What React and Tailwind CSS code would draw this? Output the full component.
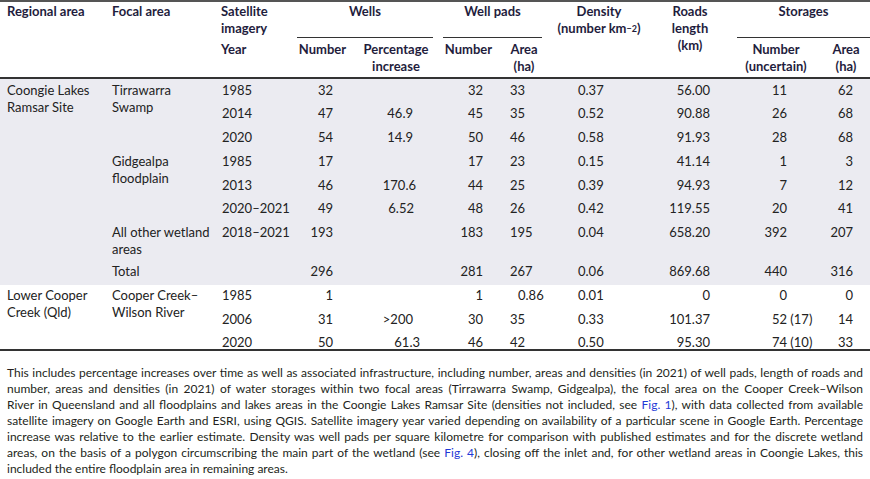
const cols = [105, 109, 76, 65, 82, 63, 48, 102, 80, 92, 48];

const cell = "align-top pt-[2.5px] pb-[4.3px] leading-[17px] whitespace-nowrap";
const lastCell = "align-top pt-[3px] pb-0 leading-[14px] whitespace-nowrap";

const coongie = [
  { year: "1985", wn: "32", pct: "", pnum: "32", parea: "33", dens: "0.37", road: "56.00", sn: "11", sx: "", sa: "62" },
  { year: "2014", wn: "47", pct: "46.9", pnum: "45", parea: "35", dens: "0.52", road: "90.88", sn: "26", sx: "", sa: "68" },
  { year: "2020", wn: "54", pct: "14.9", pnum: "50", parea: "46", dens: "0.58", road: "91.93", sn: "28", sx: "", sa: "68" },
  { year: "1985", wn: "17", pct: "", pnum: "17", parea: "23", dens: "0.15", road: "41.14", sn: "1", sx: "", sa: "3" },
  { year: "2013", wn: "46", pct: "170.6", pctPad: "pr-[21px]", pnum: "44", parea: "25", dens: "0.39", road: "94.93", sn: "7", sx: "", sa: "12" },
  { year: "2020–2021", wn: "49", pct: "6.52", pctPad: "pr-[23px]", pnum: "48", parea: "26", dens: "0.42", road: "119.55", sn: "20", sx: "", sa: "41" },
];

const cooper = [
  { year: "1985", wn: "1", pct: "", pnum: "1", parea: "0.86", pareaPad: "pl-[18px]", dens: "0.01", road: "0", sn: "0", sx: "", sa: "0" },
  { year: "2006", wn: "31", pct: ">200", pnum: "30", parea: "35", dens: "0.33", road: "101.37", sn: "52", sx: " (17)", sa: "14" },
  { year: "2020", wn: "50", pct: "61.3", pctPad: "pr-[17px]", pnum: "46", parea: "42", dens: "0.50", road: "95.30", sn: "74", sx: " (10)", sa: "33", last: true },
];

function Values({ r, yearCell = true }) {
  const c = r.last ? lastCell : cell;
  return (
    <>
      {yearCell && <td className={`${c} pl-[8px]`}>{r.year}</td>}
      <td className={`${c} text-right pr-[22px]`}>{r.wn}</td>
      <td className={`${c} text-right ${r.pctPad || "pr-[24px]"}`}>{r.pct}</td>
      <td className={`${c} text-right pr-[17px]`}>{r.pnum}</td>
      <td className={`${c} ${r.pareaPad || "pl-[10px]"}`}>{r.parea}</td>
      <td className={`${c} pl-[30px]`}>{r.dens}</td>
      <td className={`${c} text-right pr-[20px]`}>{r.road}</td>
      <td className={c}>
        <span className="inline-block w-[57px] text-right">{r.sn}</span>
        {r.sx}
      </td>
      <td className={`${c} text-right pr-[17px]`}>{r.sa}</td>
    </>
  );
}

function Link({ children }) {
  return <span className="text-[#1f3ad6]">{children}</span>;
}

const Line = ({ children, last }) => (
  <div className={last ? "whitespace-nowrap" : "whitespace-nowrap text-justify [text-align-last:justify]"}>{children}</div>
);

export default function App() {
  return (
    <div className="w-[870px] h-[479px] bg-white overflow-hidden text-[#222] [font-family:Lato,'Noto_Sans',sans-serif]">
      <table className="w-[870px] table-fixed border-collapse text-[13px]">
        <colgroup>
          {cols.map((w, i) => (
            <col key={i} style={{ width: w }} />
          ))}
        </colgroup>
        <thead className="text-[#1f1d3d] font-bold">
          <tr className="border-t-2 border-[#555]">
            <th rowSpan={2} className="align-top text-left pl-[7px] pt-[1px] leading-[17px] font-bold">Regional area</th>
            <th rowSpan={2} className="align-top text-left pl-[7px] pt-[1px] leading-[17px] font-bold">Focal area</th>
            <th className="align-top text-left pl-[7px] pt-[1px] pb-[0px] leading-[17px] font-bold">
              Satellite
              <br />
              imagery
            </th>
            <th colSpan={2} className="align-top pt-[1px] leading-[17px] font-bold">
              <div className="ml-[7px] mr-[4px] h-[35px] border-b border-[#333]">Wells</div>
            </th>
            <th colSpan={2} className="align-top pt-[1px] leading-[17px] font-bold">
              <div className="mx-[6px] h-[35px] border-b border-[#333]">Well pads</div>
            </th>
            <th rowSpan={2} className="align-top pt-[1px] leading-[17px] font-bold">
              Density
              <br />
              (number km<sup className="text-[9px] relative -top-[1px]">−2</sup>)
            </th>
            <th rowSpan={2} className="align-top pt-[1px] leading-[17px] font-bold">
              Roads
              <br />
              length
              <br />
              (km)
            </th>
            <th colSpan={2} className="align-top pt-[1px] leading-[17px] font-bold">
              <div className="ml-[7px] h-[35px] border-b border-[#333]">Storages</div>
            </th>
          </tr>
          <tr className="border-b-2 border-[#333]">
            <th className="align-top text-left pl-[7px] pt-[3px] leading-[17px] font-bold">Year</th>
            <th className="align-top pt-[3px] leading-[17px] font-bold">Number</th>
            <th className="align-top pt-[3px] pb-[2px] leading-[17px] font-bold">
              Percentage
              <br />
              increase
            </th>
            <th className="align-top pt-[3px] leading-[17px] font-bold">Number</th>
            <th className="align-top pt-[3px] leading-[17px] font-bold">
              Area
              <br />
              (ha)
            </th>
            <th className="align-top pt-[3px] leading-[17px] font-bold">
              Number
              <br />
              (uncertain)
            </th>
            <th className="align-top pt-[3px] leading-[17px] font-bold">
              Area
              <br />
              (ha)
            </th>
          </tr>
        </thead>
        <tbody className="bg-[#ebebf1]">
          <tr>
            <td rowSpan={8} className={`${cell} pl-[7px]`}>
              Coongie Lakes
              <br />
              Ramsar Site
            </td>
            <td rowSpan={3} className={`${cell} pl-[7px]`}>
              Tirrawarra
              <br />
              Swamp
            </td>
            <Values r={coongie[0]} />
          </tr>
          <tr>
            <Values r={coongie[1]} />
          </tr>
          <tr>
            <Values r={coongie[2]} />
          </tr>
          <tr>
            <td rowSpan={3} className={`${cell} pl-[7px]`}>
              Gidgealpa
              <br />
              floodplain
            </td>
            <Values r={coongie[3]} />
          </tr>
          <tr>
            <Values r={coongie[4]} />
          </tr>
          <tr>
            <Values r={coongie[5]} />
          </tr>
          <tr>
            <td className="align-top pt-[2.5px] pb-[3.5px] leading-[16.5px] pl-[7px] pr-0 whitespace-nowrap">
              All other wetland
              <br />
              areas
            </td>
            <Values r={{ year: "2018–2021", wn: "193", pct: "", pnum: "183", parea: "195", dens: "0.04", road: "658.20", sn: "392", sx: "", sa: "207" }} />
          </tr>
          <tr>
            <td className={`${cell} pl-[7px]`}>Total</td>
            <td className={cell}></td>
            <Values r={{ wn: "296", pct: "", pnum: "281", parea: "267", dens: "0.06", road: "869.68", sn: "440", sx: "", sa: "316" }} yearCell={false} />
          </tr>
        </tbody>
        <tbody className="bg-white border-b-2 border-[#333]">
          <tr>
            <td rowSpan={3} className={`${cell} pl-[7px]`}>
              Lower Cooper
              <br />
              Creek (Qld)
            </td>
            <td rowSpan={3} className={`${cell} pl-[7px]`}>
              Cooper Creek–
              <br />
              Wilson River
            </td>
            <Values r={cooper[0]} />
          </tr>
          <tr>
            <Values r={cooper[1]} />
          </tr>
          <tr>
            <Values r={cooper[2]} />
          </tr>
        </tbody>
      </table>

      <div className="mt-[14px] px-[7px] w-[870px] text-[12px] leading-[16px] text-[#231f20]">
        <Line>
          This includes percentage increases over time as well as associated infrastructure, including number, areas and densities (in 2021) of well pads, length of roads and
        </Line>
        <Line>
          number, areas and densities (in 2021) of water storages within two focal areas (Tirrawarra Swamp, Gidgealpa), the focal area on the Cooper Creek–Wilson
        </Line>
        <Line>
          River in Queensland and all floodplains and lakes areas in the Coongie Lakes Ramsar Site (densities not included, see <Link>Fig. 1</Link>), with data collected from available
        </Line>
        <Line>
          satellite imagery on Google Earth and ESRI, using QGIS. Satellite imagery year varied depending on availability of a particular scene in Google Earth. Percentage
        </Line>
        <Line>
          increase was relative to the earlier estimate. Density was well pads per square kilometre for comparison with published estimates and for the discrete wetland
        </Line>
        <Line>
          areas, on the basis of a polygon circumscribing the main part of the wetland (see <Link>Fig. 4</Link>), closing off the inlet and, for other wetland areas in Coongie Lakes, this
        </Line>
        <Line last>included the entire floodplain area in remaining areas.</Line>
      </div>
    </div>
  );
}
